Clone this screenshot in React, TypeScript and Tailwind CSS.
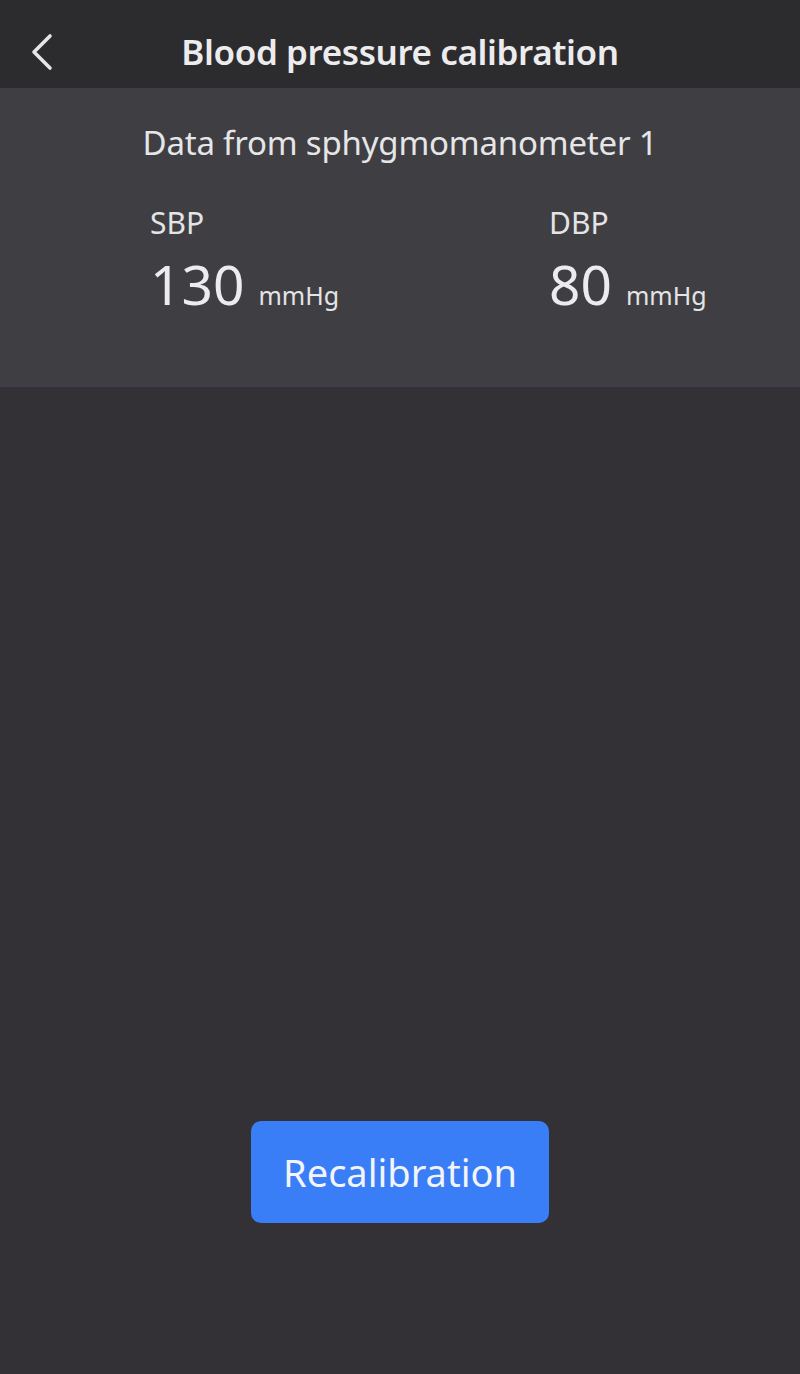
import React from "react";

function BackIcon() {
  return (
    <svg width="24" height="38" viewBox="0 0 24 38" fill="none">
      <path
        d="M20 3 L4 19 L20 35"
        stroke="#e6e6e8"
        strokeWidth="3.6"
        strokeLinecap="round"
        strokeLinejoin="round"
      />
    </svg>
  );
}

function Reading({ label, value }: { label: string; value: string }) {
  return (
    <div className="flex flex-col">
      <span className="text-[30px] leading-none text-[#e4e4e6]">{label}</span>
      <div className="mt-[18px] flex items-baseline gap-[14px]">
        <span className="text-[55px] leading-none text-[#ececee]">{value}</span>
        <span className="text-[25px] leading-none text-[#e4e4e6]">mmHg</span>
      </div>
    </div>
  );
}

export default function App() {
  return (
    <div
      className="flex h-[1374px] w-[800px] flex-col bg-[#333135]"
      style={{ fontFamily: '"Noto Sans", "Liberation Sans", sans-serif' }}
    >
      {/* Header */}
      <header className="relative flex h-[88px] justify-center bg-[#2c2b2e] pt-[34px]">
        <button className="absolute left-[30px] top-[33px]">
          <BackIcon />
        </button>
        <h1 className="text-[35px] font-semibold leading-none tracking-[-0.4px] text-[#ececee]">
          Blood pressure calibration
        </h1>
      </header>

      {/* Data panel */}
      <section className="h-[299px] border-b border-[#3d3d55] bg-[#3f3e42] pt-[38px]">
        <p className="text-center text-[33px] leading-none tracking-[-0.2px] text-[#e6e6e8]">
          Data from sphygmomanometer 1
        </p>
        <div className="mt-[49px] flex pl-[150px]">
          <div className="w-[399px]">
            <Reading label="SBP" value="130" />
          </div>
          <Reading label="DBP" value="80" />
        </div>
      </section>

      <div className="flex-1" />

      <div className="flex justify-center pb-[151px]">
        <button className="flex h-[102px] w-[298px] items-center justify-center rounded-[10px] bg-[#3a7ef7] text-[38px] text-[#f2f4f8]">
          Recalibration
        </button>
      </div>
    </div>
  );
}
